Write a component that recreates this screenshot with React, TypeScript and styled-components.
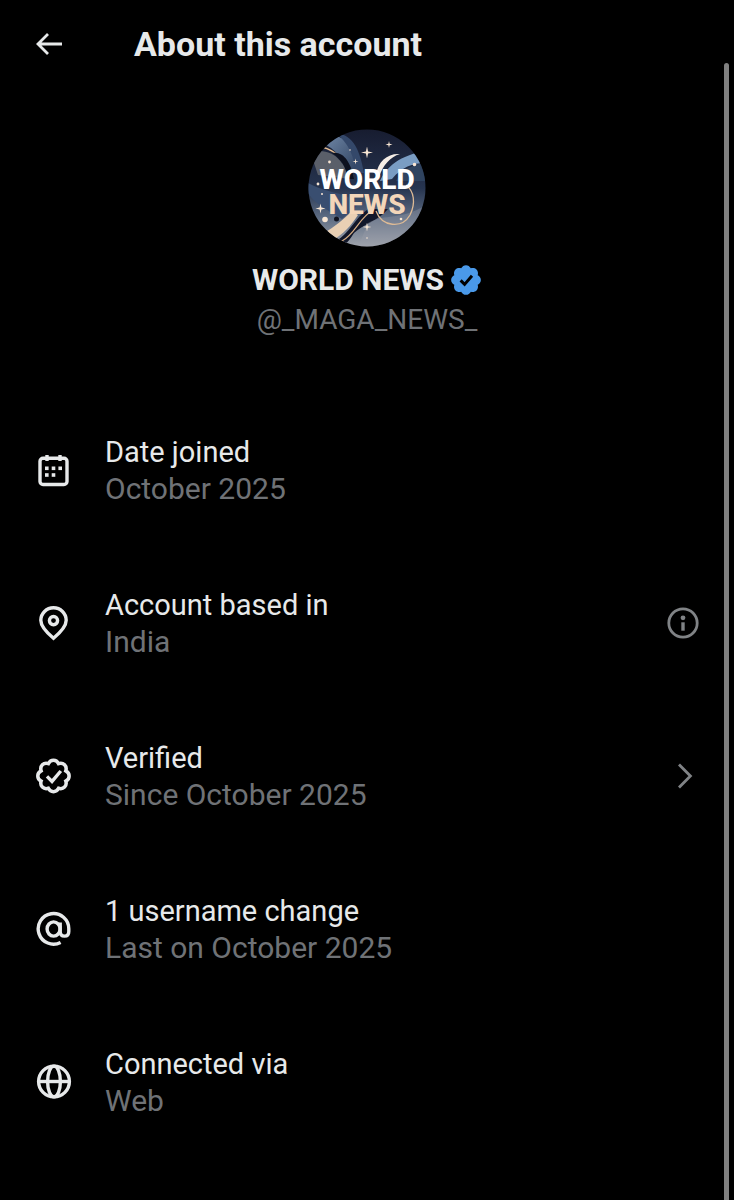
import React from 'react';
import styled, { createGlobalStyle } from 'styled-components';

const GlobalStyle = createGlobalStyle`
  * { box-sizing: border-box; }
  html, body { margin: 0; background: #000; }
  body {
    color: #e7e9ea;
    font-family: Roboto, "Noto Sans", sans-serif;
    font-size: 30px;
    line-height: 37px;
    scrollbar-width: none;
  }
`;

const Page = styled.div`
  min-height: 100vh;
  background: #000;
`;

const Header = styled.header`
  display: flex;
  align-items: center;
  gap: 68px;
  height: 88px;
  padding: 0 32px;
`;

const IconButton = styled.button`
  display: flex;
  flex: none;
  padding: 0;
  border: 0;
  background: none;
  color: inherit;
  cursor: pointer;
`;

const Title = styled.h1`
  margin: 0;
  font-size: 34px;
  line-height: 40px;
  font-weight: 700;
`;

const Profile = styled.section`
  display: flex;
  flex-direction: column;
  align-items: center;
  padding: 41px 0 53px;
`;

const Avatar = styled.svg`
  display: block;
  width: 118px;
  height: 118px;
  margin-bottom: 13px;
`;

const NameLine = styled.div`
  display: flex;
  align-items: center;
  gap: 6px;
`;

const Name = styled.h2`
  margin: 0;
  font-size: 30px;
  line-height: 40px;
  font-weight: 700;
`;

const Handle = styled.div`
  color: #6f7276;
  font-size: 28px;
  line-height: 40px;
`;

const List = styled.ul`
  margin: 0;
  padding: 0;
  list-style: none;
`;

const Row = styled.li`
  display: flex;
  align-items: center;
  min-height: 153px;
  padding: 0 35px 0 36px;
`;

const RowIcon = styled.svg`
  display: block;
  flex: none;
  width: 36px;
  height: 36px;
`;

const RowText = styled.div`
  flex: 1;
  margin-left: 33px;
`;

const Label = styled.div`
  font-size: 29px;
`;

const Value = styled.div`
  color: #6f7276;
  line-height: 35px;
`;

const ActionButton = styled(IconButton)`
  color: #808386;
`;

const ScrollThumb = styled.div`
  position: fixed;
  top: 63px;
  right: 5px;
  bottom: 0;
  width: 5px;
  border-radius: 3px 3px 0 0;
  background: #808080;
`;

const BADGE =
  'M22.25 12c0-1.43-.88-2.67-2.19-3.34.46-1.39.2-2.9-.81-3.91s-2.52-1.27-3.91-.81c-.66-1.31-1.91-2.19-3.34-2.19s-2.67.88-3.33 2.19c-1.4-.46-2.91-.2-3.92.81s-1.26 2.52-.8 3.91c-1.31.67-2.2 1.91-2.2 3.34s.89 2.67 2.2 3.34c-.46 1.39-.21 2.9.8 3.91s2.52 1.26 3.91.81c.67 1.31 1.91 2.19 3.34 2.19s2.68-.88 3.34-2.19c1.39.45 2.9.2 3.91-.81s1.27-2.52.81-3.91c1.31-.67 2.19-1.91 2.19-3.34z';

const stroke = { fill: 'none', stroke: 'currentColor', strokeWidth: 3.4 };

const CalendarIcon = () => (
  <RowIcon viewBox="0 0 36 36" aria-hidden="true">
    <rect x="4" y="6.2" width="27" height="26.3" rx="3" {...stroke} />
    <path d="M11 3v6M24 3v6" {...stroke} />
    <g fill="currentColor">
      <rect x="9" y="14.5" width="3.6" height="3.6" />
      <rect x="15.7" y="14.5" width="3.6" height="3.6" />
      <rect x="22.4" y="14.5" width="3.6" height="3.6" />
      <rect x="9" y="21.2" width="3.6" height="3.6" />
      <rect x="15.7" y="21.2" width="3.6" height="3.6" />
    </g>
  </RowIcon>
);

const PinIcon = () => (
  <RowIcon viewBox="0 0 36 36" aria-hidden="true">
    <path
      d="M17.5 33.2C12.5 29 4.8 22.5 4.8 15.2a12.7 12.4 0 0 1 25.4 0c0 7.3-7.7 13.8-12.7 18z"
      {...stroke}
    />
    <circle cx="17.5" cy="15.6" r="4.1" {...stroke} />
  </RowIcon>
);

const VerifiedIcon = () => (
  <RowIcon viewBox="0 0 36 36" aria-hidden="true">
    <g transform="translate(-0.9 -0.4) scale(1.53)">
      <path d={BADGE} fill="none" stroke="currentColor" strokeWidth="2.3" />
    </g>
    <path d="M11 18.4l5 5 8.8-10.4" {...stroke} />
  </RowIcon>
);

const AtIcon = () => (
  <RowIcon viewBox="0 0 36 36" aria-hidden="true">
    <path
      d="M24.6 31.4A15.3 15.3 0 1 1 32.8 18v2.4c0 3-1.8 4.7-4.3 4.7s-4.3-1.7-4.3-4.7v-9"
      {...stroke}
    />
    <ellipse cx="17.6" cy="18" rx="6.5" ry="7.1" {...stroke} />
  </RowIcon>
);

const GlobeIcon = () => (
  <RowIcon viewBox="0 0 36 36" aria-hidden="true">
    <circle cx="18" cy="17.5" r="15.4" {...stroke} />
    <ellipse cx="18" cy="17.5" rx="6.4" ry="15.4" {...stroke} />
    <path d="M2.6 17.5h30.8" {...stroke} />
  </RowIcon>
);

const InfoIcon = () => (
  <svg width="32" height="32" viewBox="0 0 32 32" aria-hidden="true">
    <circle cx="16" cy="16" r="14.2" fill="none" stroke="currentColor" strokeWidth="2.8" />
    <circle cx="16" cy="10.8" r="2.4" fill="currentColor" />
    <path d="M16 15.3v8.4" stroke="currentColor" strokeWidth="3.4" />
  </svg>
);

const ChevronIcon = () => (
  <svg width="32" height="32" viewBox="0 0 32 32" aria-hidden="true">
    <path d="M12 4.6 23.4 16 12 27.4" fill="none" stroke="currentColor" strokeWidth="2.8" />
  </svg>
);

const BackIcon = () => (
  <svg width="34" height="34" viewBox="0 0 34 34" aria-hidden="true">
    <path d="M30 17H6M16 7 6 17l10 10" fill="none" stroke="currentColor" strokeWidth="2.8" />
  </svg>
);

const NameBadge = () => (
  <svg width="32" height="32" viewBox="0 0 32 32" role="img" aria-label="Verified account">
    <path d={BADGE} transform="translate(-1.4 -1.4) scale(1.45)" fill="#4a99e9" />
    <path d="M10.6 16.4l4 4 7.4-8.6" fill="none" stroke="#000" strokeWidth="3" />
  </svg>
);

const Star = ({ x, y, r }: { x: number; y: number; r: number }) => (
  <path
    transform={`translate(${x} ${y}) scale(${r})`}
    d="M0-1 .18-.18 1 0 .18.18 0 1-.18.18-1 0-.18-.18z"
    fill="#f8e6d4"
  />
);

const AccountAvatar = () => (
  <Avatar viewBox="0 0 118 118" role="img" aria-label="World News avatar">
    <defs>
      <clipPath id="disc"><circle cx="59" cy="59" r="58.5" /></clipPath>
      <linearGradient id="sky" x1="0" y1="0" x2="0" y2="1">
        <stop offset="0" stopColor="#171c30" />
        <stop offset=".5" stopColor="#26344f" />
        <stop offset=".75" stopColor="#5d6c83" />
        <stop offset="1" stopColor="#a1a5ad" />
      </linearGradient>
      <linearGradient id="ribbon" x1="0" y1="0" x2="1" y2="1">
        <stop offset="0" stopColor="#7189a8" />
        <stop offset="1" stopColor="#2b3d5c" />
      </linearGradient>
    </defs>
    <g clipPath="url(#disc)">
      <rect width="118" height="118" fill="url(#sky)" />
      <path d="M14 14C30 0 42 8 50 42L36 46C36 30 28 20 14 14z" fill="url(#ribbon)" />
      <path d="M28 4C46 6 52 22 56 44L48 44C46 26 40 14 28 4z" fill="#34486a" />
      <path d="M2 22C26 20 34 30 42 50L10 46z" fill="#5a5f69" />
      <path d="M14 18C30 22 38 34 42 48" fill="none" stroke="#e5bd91" strokeWidth="1.6" />
      <path d="M24 24C36 22 43 34 46 50L40 50C38 38 33 30 24 24z" fill="#0d111f" />
      <path d="M118 22C92 26 78 38 72 52L84 50C94 38 104 34 118 34z" fill="#7a9dc3" />
      <path d="M118 34C100 36 92 44 88 52L118 52z" fill="#2f435f" />
      <path d="M68 46C70 32 80 24 92 25C82 28 75 36 71 48z" fill="#f6eee6" />
      <path d="M0 54C22 66 38 62 50 76L34 90C18 80 6 74 0 64z" fill="#394e70" />
      <path d="M28 112C42 104 46 90 60 80L80 80C70 92 54 96 46 104C42 110 38 118 28 118z" fill="#11172a" />
      <path d="M60 94C78 84 92 92 118 76L118 118L50 118z" fill="#9a9fa8" opacity=".35" />
      <path d="M16 104C26 98 34 92 44 82L50 86C42 98 36 104 24 112z" fill="#e9d0b4" />
      <path d="M34 112C48 104 50 90 66 80" fill="none" stroke="#d7ad83" strokeWidth="1.2" />
      <path d="M68 82C74 98 94 100 102 86C108 74 106 62 98 56" fill="none" stroke="#ddba95" strokeWidth="1.3" />
      <Star x={59} y={23.5} r={6} />
      <Star x={81} y={15.5} r={3.5} />
      <Star x={47.5} y={32.5} r={3} />
      <Star x={12.5} y={79.5} r={5} />
      <Star x={59} y={98} r={4.5} />
      <g fill="#f8e6d4">
        <circle cx="21.5" cy="33" r="1.4" />
        <circle cx="106.5" cy="35.5" r="1.8" />
        <circle cx="10" cy="55" r="1.4" />
        <circle cx="14" cy="65" r="1" />
        <circle cx="93" cy="90" r="1.3" />
        <circle cx="42" cy="21" r=".8" />
        <circle cx="59" cy="109" r=".8" />
        <circle cx="17" cy="90.5" r="2.8" />
      </g>
      <circle cx="28.5" cy="90" r="2.5" fill="#10131f" />
      <g
        fontFamily="Roboto, sans-serif"
        fontWeight="800"
        textAnchor="middle"
        fontSize="28"
      >
        <text x="59" y="60" fill="#fff">WORLD</text>
        <text x="59" y="85" fill="#f3d6b9">NEWS</text>
      </g>
    </g>
  </Avatar>
);

type Item = {
  icon: React.ReactNode;
  label: string;
  value: string;
  action?: { name: string; icon: React.ReactNode };
};

const items: Item[] = [
  { icon: <CalendarIcon />, label: 'Date joined', value: 'October 2025' },
  {
    icon: <PinIcon />,
    label: 'Account based in',
    value: 'India',
    action: { name: 'About account location', icon: <InfoIcon /> },
  },
  {
    icon: <VerifiedIcon />,
    label: 'Verified',
    value: 'Since October 2025',
    action: { name: 'Verification details', icon: <ChevronIcon /> },
  },
  { icon: <AtIcon />, label: '1 username change', value: 'Last on October 2025' },
  { icon: <GlobeIcon />, label: 'Connected via', value: 'Web' },
];

export default function App() {
  return (
    <Page>
      <GlobalStyle />
      <Header>
        <IconButton type="button" aria-label="Back"><BackIcon /></IconButton>
        <Title>About this account</Title>
      </Header>
      <main>
        <Profile>
          <AccountAvatar />
          <NameLine>
            <Name>WORLD NEWS</Name>
            <NameBadge />
          </NameLine>
          <Handle>@_MAGA_NEWS_</Handle>
        </Profile>
        <List>
          {items.map((item) => (
            <Row key={item.label}>
              {item.icon}
              <RowText>
                <Label>{item.label}</Label>
                <Value>{item.value}</Value>
              </RowText>
              {item.action && (
                <ActionButton type="button" aria-label={item.action.name}>
                  {item.action.icon}
                </ActionButton>
              )}
            </Row>
          ))}
        </List>
      </main>
      <ScrollThumb />
    </Page>
  );
}
